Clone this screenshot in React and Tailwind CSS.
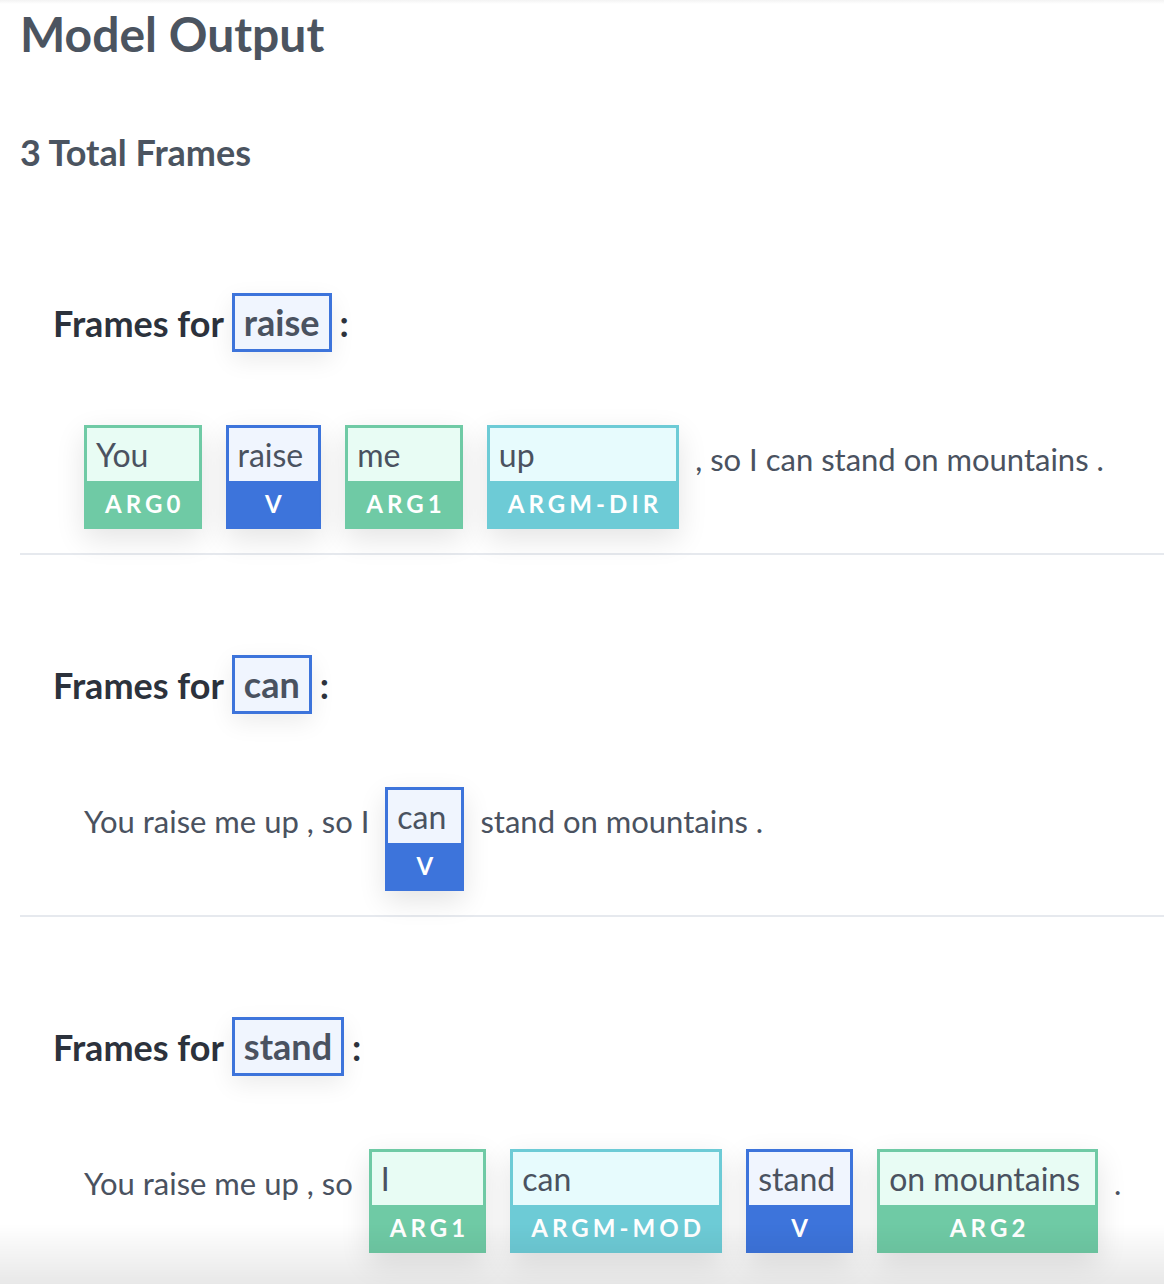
import React from 'react';

const TONES = {
    arg: { border: 'border-[#6fcaa5]', fill: 'bg-[#6fcaa5]', light: 'bg-[#e8fcf4]' },
    verb: { border: 'border-[#3d74db]', fill: 'bg-[#3d74db]', light: 'bg-[#f0f5fe]' },
    mod: { border: 'border-[#6dcbd6]', fill: 'bg-[#6dcbd6]', light: 'bg-[#e7fbfd]' },
};

const frames = [
    {
        verb: 'raise',
        parts: [
            { word: 'You', label: 'ARG0', tone: 'arg' },
            { word: 'raise', label: 'V', tone: 'verb' },
            { word: 'me', label: 'ARG1', tone: 'arg' },
            { word: 'up', label: 'ARGM-DIR', tone: 'mod' },
            { text: ', so I can stand on mountains .' },
        ],
    },
    {
        verb: 'can',
        parts: [
            { text: 'You raise me up , so I' },
            { word: 'can', label: 'V', tone: 'verb' },
            { text: 'stand on mountains .' },
        ],
    },
    {
        verb: 'stand',
        parts: [
            { text: 'You raise me up , so' },
            { word: 'I', label: 'ARG1', tone: 'arg' },
            { word: 'can', label: 'ARGM-MOD', tone: 'mod' },
            { word: 'stand', label: 'V', tone: 'verb' },
            { word: 'on mountains', label: 'ARG2', tone: 'arg' },
            { text: '.' },
        ],
    },
];

function Chip({ word, label, tone }) {
    const t = TONES[tone];
    return (
        <div className={`flex flex-col border-[3px] ${t.border} ${t.fill} shadow-[0_10px_28px_rgba(0,0,0,0.11)]`}>
            <div className={`${t.light} pl-[9px] pr-[15px] py-[4px] text-[32px] leading-[45px] text-[#4a5260] whitespace-nowrap`}>{word}</div>
            <div className="pl-[18px] pr-[14px] text-center text-[24px] leading-[45px] font-bold tracking-[0.17em] text-white whitespace-nowrap">{label}</div>
        </div>
    );
}

function Frame({ frame, last }) {
    return (
        <div className={last ? '' : 'border-b-2 border-[#e6e9ee] pb-[24px] mb-[100px]'}>
            <div className="pl-[33px] flex items-center gap-[8px] text-[36px] font-bold text-[#2c323c]">
                <span>Frames for</span>
                <span className="border-[3px] border-[#3d74db] bg-[#f0f5fe] px-[9px] py-[6px] leading-[41px] text-[#4a5260] shadow-[0_8px_24px_rgba(0,0,0,0.08)]">{frame.verb}</span>
                <span>:</span>
            </div>
            <div className="pl-[64px] mt-[73px] flex items-start">
                {frame.parts.map((p, i) => {
                    const prev = frame.parts[i - 1];
                    const gap = i === 0 ? '' : prev.word && p.word ? 'ml-[24px]' : 'ml-[16px]';
                    if (p.word) {
                        return (
                            <div key={i} className={gap}>
                                <Chip {...p} />
                            </div>
                        );
                    }
                    return (
                        <span key={i} className={`${gap} pt-[12px] text-[31px] leading-[45px] text-[#4a5260] whitespace-nowrap`}>{p.text}</span>
                    );
                })}
            </div>
        </div>
    );
}

export default function App() {
    return (
        <div className="relative min-h-[1284px] bg-white font-['Lato',sans-serif] overflow-hidden">
            <div className="pointer-events-none fixed inset-x-0 top-0 h-[4px] bg-gradient-to-b from-[#f3f3f3] to-white" />
            <div className="pl-[20px]">
                <h1 className="pt-[5px] text-[48px] leading-[58px] font-bold text-[#4b5460]">Model Output</h1>
                <h2 className="mt-[68px] text-[36px] leading-[43px] font-bold text-[#4b5460]">3 Total Frames</h2>
                <div className="mt-[119px]">
                    {frames.map((f, i) => (
                        <Frame key={f.verb} frame={f} last={i === frames.length - 1} />
                    ))}
                </div>
            </div>
            <div className="pointer-events-none fixed inset-x-0 bottom-0 h-[60px] bg-gradient-to-b from-transparent to-[rgba(0,0,0,0.09)]" />
        </div>
    );
}
